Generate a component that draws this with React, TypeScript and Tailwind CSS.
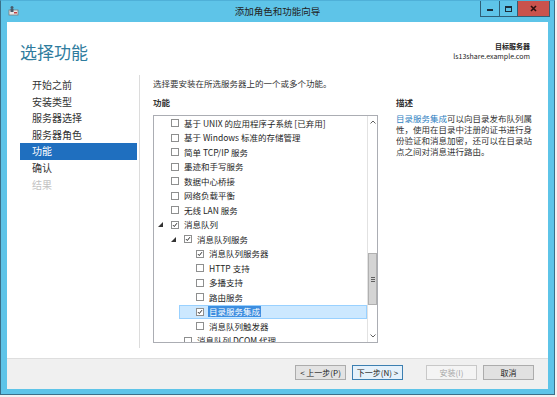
import React from 'react';

type Row = { level: 1 | 2 | 3; text: string; checked?: boolean; expand?: boolean; selected?: boolean };

const rows: Row[] = [
  { level: 1, text: '基于 UNIX 的应用程序子系统 [已弃用]' },
  { level: 1, text: '基于 Windows 标准的存储管理' },
  { level: 1, text: '简单 TCP/IP 服务' },
  { level: 1, text: '墨迹和手写服务' },
  { level: 1, text: '数据中心桥接' },
  { level: 1, text: '网络负载平衡' },
  { level: 1, text: '无线 LAN 服务' },
  { level: 1, text: '消息队列', checked: true, expand: true },
  { level: 2, text: '消息队列服务', checked: true, expand: true },
  { level: 3, text: '消息队列服务器', checked: true },
  { level: 3, text: 'HTTP 支持' },
  { level: 3, text: '多播支持' },
  { level: 3, text: '路由服务' },
  { level: 3, text: '目录服务集成', checked: true, selected: true },
  { level: 3, text: '消息队列触发器' },
  { level: 2, text: '消息队列 DCOM 代理' },
];

const padFor: Record<number, string> = { 1: 'pl-[4px]', 2: 'pl-[17px]', 3: 'pl-[29px]' };

function Box({ checked }: { checked?: boolean }) {
  return (
    <div className="w-[8px] h-[8px] border border-[#8e8f8f] bg-white shrink-0 flex items-center justify-center">
      {checked && (
        <svg width="8" height="8" viewBox="0 0 8 8" className="block">
          <path d="M1.3 4.2 L3.1 6 L6.6 1.6" stroke="#222" strokeWidth="1.3" fill="none" />
        </svg>
      )}
    </div>
  );
}

function Expander() {
  return (
    <svg width="5" height="5" viewBox="0 0 5 5" className="block">
      <polygon points="5,0 5,5 0,5" fill="#333" />
    </svg>
  );
}

function ListRow({ r }: { r: Row }) {
  if (r.selected) {
    return (
      <div className="flex h-[14.5px] pl-[25px]">
        <div className="flex-1 flex items-center border border-[#99d1ff] bg-[#cce8ff] pl-[16px]">
          <Box checked={r.checked} />
          <span className="ml-[4px] px-[1px] bg-[#3d8ee0] text-white leading-[11px]">{r.text}</span>
        </div>
      </div>
    );
  }
  return (
    <div className={`flex items-center h-[14.5px] ${padFor[r.level]}`}>
      <div className="w-[13px] flex items-center">{r.expand && <Expander />}</div>
      <Box checked={r.checked} />
      <span className="ml-[5px] whitespace-nowrap">{r.text}</span>
    </div>
  );
}

const nav = ['开始之前', '安装类型', '服务器选择', '服务器角色', '功能', '确认', '结果'];

function Chevron({ up }: { up?: boolean }) {
  return (
    <svg width="6" height="4" viewBox="0 0 6 4" className="block">
      <path d={up ? 'M0.5 3.5 L3 1 L5.5 3.5' : 'M0.5 0.5 L3 3 L5.5 0.5'} stroke="#606060" strokeWidth="1" fill="none" />
    </svg>
  );
}

export default function App() {
  return (
    <div className="w-[557px] h-[397px] bg-[#f2f2f2] overflow-hidden font-['Noto_Sans_CJK_SC',sans-serif] text-[#222]">
      <div className="w-[555px] h-[395px] bg-[#5ec4e8] border border-[#3b6f88] border-t-[#4fb0d8] flex flex-col">
        {/* title bar */}
        <div className="h-[21px] grid grid-cols-[1fr_auto_1fr] items-start">
          <div className="pl-[7px] pt-[4px]">
            <svg width="11" height="11" viewBox="0 0 11 11" className="block">
              <rect x="1" y="5" width="9" height="5" fill="#e8e8e8" stroke="#7a7a7a" strokeWidth="0.8" />
              <circle cx="4" cy="2.5" r="1.5" fill="#4a5a6a" />
              <rect x="2.5" y="4" width="3" height="3" fill="#4a5a6a" />
              <rect x="6" y="7" width="3" height="1.5" fill="#c04040" />
            </svg>
          </div>
          <div className="text-[9.5px] leading-[21px] text-[#222]">添加角色和功能向导</div>
          <div className="flex justify-end pr-[4px]">
            <div className="flex h-[16px] border border-[#2f5f77] border-t-0">
              <div className="w-[18px] flex items-end justify-center pb-[5px]">
                <div className="w-[6px] h-[2px] bg-[#1c2e3a]" />
              </div>
              <div className="w-[18px] border-l border-[#2f5f77] flex items-center justify-center">
                <div className="w-[7px] h-[6px] border border-t-2 border-[#1c2e3a]" />
              </div>
              <div className="w-[32px] border-l border-[#2f5f77] bg-[#c9524d] flex items-center justify-center">
                <svg width="7" height="7" viewBox="0 0 7 7" className="block">
                  <path d="M1 1 L6 6 M6 1 L1 6" stroke="#2a1010" strokeWidth="1.6" />
                </svg>
              </div>
            </div>
          </div>
        </div>

        {/* client */}
        <div className="flex-1 px-[6px] pb-[5px] flex">
          <div className="flex-1 bg-white flex flex-col">
            {/* header */}
            <div className="h-[53px] flex justify-between">
              <div className="pl-[13px] pt-[20px] text-[17px] leading-[20px] text-[#2f7c9e]">选择功能</div>
              <div className="pr-[18px] pt-[19px] text-right text-[7px] leading-[10px] text-[#222]">
                <div className="font-bold">目标服务器</div>
                <div>ls13share.example.com</div>
              </div>
            </div>

            {/* body */}
            <div className="flex-1 flex">
              <div className="w-[133px] border-r border-[#dcdcdc] mb-[10px] pt-[2px] pl-[13px] pr-[2px] text-[10px]">
                {nav.map((n) => (
                  <div
                    key={n}
                    className={
                      n === '功能'
                        ? 'h-[16.6px] leading-[16.6px] pl-[12px] bg-[#1f6fbf] text-white'
                        : n === '结果'
                        ? 'h-[16.6px] leading-[16.6px] pl-[12px] text-[#c2c2c2]'
                        : 'h-[16.6px] leading-[16.6px] pl-[12px] text-[#333]'
                    }
                  >
                    {n}
                  </div>
                ))}
              </div>

              <div className="flex-1 pl-[13px] pt-[2px] text-[8.5px]">
                <div className="leading-[12px] text-[#333]">选择要安装在所选服务器上的一个或多个功能。</div>
                <div className="flex mt-[7px]">
                  <div className="w-[225px]">
                    <div className="leading-[12px] font-bold text-[#333]">功能</div>
                    <div className="mt-[7px] h-[228px] border border-[#abadb3] flex overflow-hidden">
                      <div className="flex-1 overflow-hidden text-[#1e1e1e]">
                        {rows.map((r) => (
                          <ListRow key={r.text} r={r} />
                        ))}
                      </div>
                      <div className="w-[10px] border-l border-[#e2e2e2] flex flex-col">
                        <div className="h-[12px] flex items-center justify-center">
                          <Chevron up />
                        </div>
                        <div className="flex-1">
                          <div className="mt-[125px] h-[52px] bg-[#d4d4d4] border border-[#b0b0b0] flex items-center justify-center">
                            <div className="w-[4px] flex flex-col gap-[1px]">
                              <div className="h-px bg-[#606060]" />
                              <div className="h-px bg-[#606060]" />
                              <div className="h-px bg-[#606060]" />
                            </div>
                          </div>
                        </div>
                        <div className="h-[12px] flex items-center justify-center">
                          <Chevron />
                        </div>
                      </div>
                    </div>
                  </div>
                  <div className="ml-[18px] w-[140px]">
                    <div className="leading-[12px] font-bold text-[#333]">描述</div>
                    <div className="mt-[5px] leading-[11px] text-[#333] whitespace-nowrap">
                      <div>
                        <span className="text-[#2f7fc1]">目录服务集成</span>可以向目录发布队列属
                      </div>
                      <div>性，使用在目录中注册的证书进行身</div>
                      <div>份验证和消息加密，还可以在目录站</div>
                      <div>点之间对消息进行路由。</div>
                    </div>
                  </div>
                </div>
              </div>
            </div>

            {/* footer */}
            <div className="h-[31px] bg-[#f0f0f0] border-t border-[#dedede] flex justify-end items-start pt-[6px] pr-[14px] text-[8px]">
              <div className="w-[51px] h-[15px] border border-[#acacac] bg-[#e3e3e3] flex items-center justify-center text-[#222]">&lt; 上一步(P)</div>
              <div className="ml-[6px] w-[51px] h-[15px] border border-[#3c7fb1] bg-[#e5f1fb] flex items-center justify-center text-[#222]">下一步(N) &gt;</div>
              <div className="ml-[23px] w-[51px] h-[15px] border border-[#c8c8c8] bg-[#f4f4f4] flex items-center justify-center text-[#a6a6a6]">安装(I)</div>
              <div className="ml-[6px] w-[51px] h-[15px] border border-[#acacac] bg-[#e1e1e1] flex items-center justify-center text-[#222]">取消</div>
            </div>
          </div>
        </div>
      </div>
    </div>
  );
}
